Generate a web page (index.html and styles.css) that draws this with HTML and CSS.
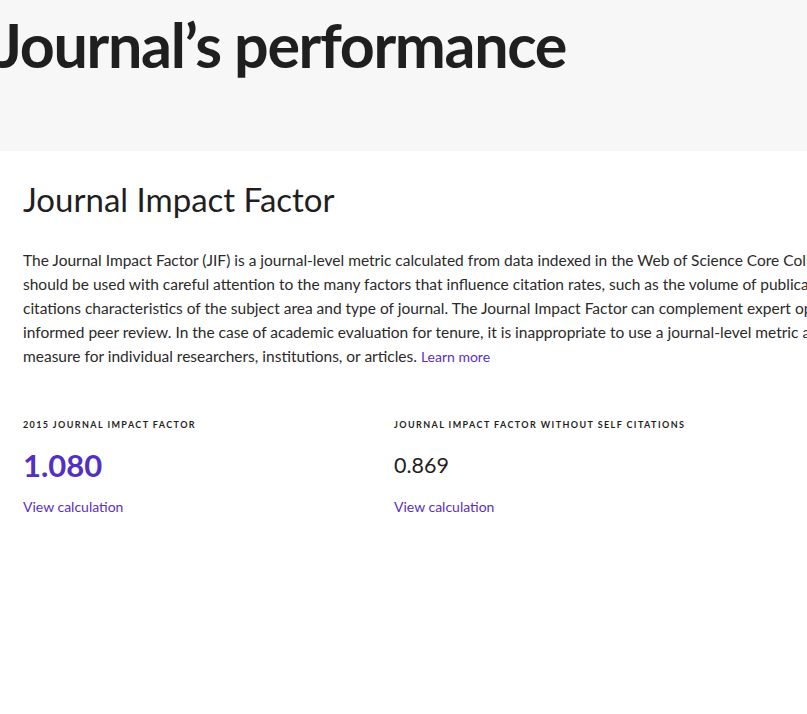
FILE: index.html
```html
<!DOCTYPE html>
<html lang="en">
<head>
<meta charset="utf-8">
<link rel="stylesheet" href="styles.css">
<title>Journal's performance</title>
</head>
<body>
<div class="page">
  <header class="hero">
    <h1 class="hero-title">Journal’s performance</h1>
  </header>
  <main class="content">
    <h2 class="section-title">Journal Impact Factor</h2>
    <p class="intro">The Journal Impact Factor (JIF) is a journal-level metric calculated from data indexed in the Web of Science Core Collection. It<br>should be used with careful attention to the many factors that influence citation rates, such as the volume of publication and<br>citations characteristics of the subject area and type of journal. The Journal Impact Factor can complement expert opinion and<br>informed peer review. In the case of academic evaluation for tenure, it is inappropriate to use a journal-level metric as a proxy<br>measure for individual researchers, institutions, or articles. <a class="link small" href="#">Learn more</a></p>
    <div class="metrics">
      <div class="metric">
        <div class="metric-label">2015 Journal Impact Factor</div>
        <div class="metric-value primary">1.080</div>
        <a class="link" href="#">View calculation</a>
      </div>
      <div class="metric">
        <div class="metric-label">Journal Impact Factor without self citations</div>
        <div class="metric-value">0.869</div>
        <a class="link" href="#">View calculation</a>
      </div>
    </div>
  </main>
</div>
</body>
</html>
```
FILE: styles.css
```css
html, body {
  margin: 0;
  padding: 0;
  background: #ffffff;
  overflow: hidden;
}
body {
  font-family: Lato, "Noto Sans", sans-serif;
  color: #222222;
}
.page {
  width: 1100px;
}
.hero {
  background: #f7f7f7;
  height: 151px;
  box-sizing: border-box;
  padding-top: 9px;
}
.hero-title {
  margin: 0 0 0 -4px;
  font-size: 61px;
  font-weight: 700;
  line-height: 72px;
  letter-spacing: -1.35px;
  color: #1f1f1f;
}
.content {
  padding: 28px 0 0 23px;
}
.section-title {
  margin: 0;
  font-size: 33px;
  font-weight: 400;
  line-height: 40px;
  color: #1f1f1f;
}
.intro {
  margin: 29px 0 0;
  white-space: nowrap;
  font-size: 15.5px;
  line-height: 24px;
  color: #2a2a2a;
}
.link {
  color: #5b2fc1;
  text-decoration: none;
  font-size: 14px;
}
.link.small {
  font-size: 14px;
}
.metrics {
  display: flex;
  margin-top: 50px;
}
.metric {
  width: 371px;
  display: flex;
  flex-direction: column;
  align-items: flex-start;
}
.metric-label {
  font-size: 9px;
  font-weight: 700;
  letter-spacing: 1.4px;
  text-transform: uppercase;
  line-height: 12px;
  color: #1f1f1f;
}
.metric-value {
  margin-top: 18px;
  font-size: 21.5px;
  line-height: 32px;
  color: #1f1f1f;
}
.metric-value.primary {
  font-size: 31px;
  font-weight: 700;
  color: #5230c0;
}
.metric .link {
  margin-top: 16px;
  line-height: 20px;
}
```
